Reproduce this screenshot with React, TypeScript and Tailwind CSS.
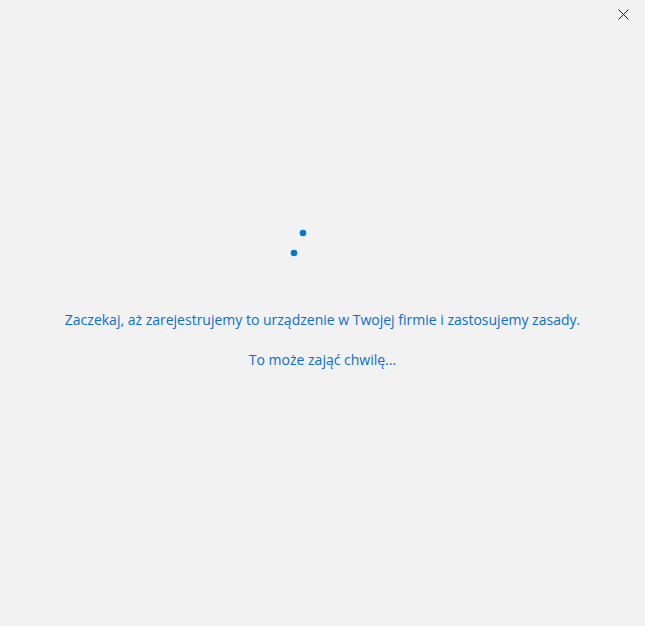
import React from 'react'

// Windows-style progress ring frame (two dots visible)
const Spinner = () => (
  <svg width="80" height="40" viewBox="0 0 80 40" className="block">
    <circle cx="20" cy="10" r="3.3" fill="#0078d4" />
    <circle cx="11" cy="30" r="3.3" fill="#0078d4" />
  </svg>
)

export default function App() {
  return (
    <div
      className="flex h-[626px] w-[645px] flex-col bg-[#f2f2f2] text-[#0a6ed4]"
      style={{ fontFamily: '"Segoe UI", "Open Sans", "Noto Sans", sans-serif' }}
    >
      <div className="flex h-7 items-start justify-end">
        <button className="flex h-7 w-[44px] items-center justify-center">
          <svg width="11" height="11" viewBox="0 0 11 11">
            <path d="M0.5 0.5 L10.5 10.5 M10.5 0.5 L0.5 10.5" stroke="#1a1a1a" strokeWidth="1" fill="none" />
          </svg>
        </button>
      </div>
      <main className="mt-[195px] flex flex-col items-center">
        <Spinner />
        <p className="mt-[47px] text-[14px] leading-5">
          Zaczekaj, aż zarejestrujemy to urządzenie w Twojej firmie i zastosujemy zasady.
        </p>
        <p className="mt-5 text-[14px] leading-5">To może zająć chwilę...</p>
      </main>
    </div>
  )
}
